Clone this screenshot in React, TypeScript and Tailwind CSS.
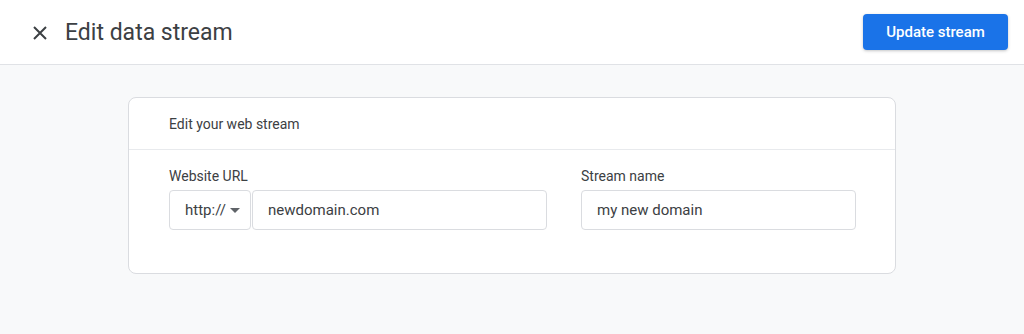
import { useState } from "react";

type FieldProps = {
  label: string;
  children: React.ReactNode;
  className?: string;
};

const Field = ({ label, children, className }: FieldProps) => (
  <div className={`flex flex-col gap-1 ${className ?? ""}`}>
    <label className="text-sm leading-5 text-[#3c4043]">{label}</label>
    {children}
  </div>
);

export default function App() {
  const [protocol] = useState("http://");
  const [url, setUrl] = useState("newdomain.com");
  const [name, setName] = useState("my new domain");

  return (
    <div
      className="min-h-[334px] bg-[#f8f9fa] text-[#202124]"
      style={{ fontFamily: "Roboto, 'Liberation Sans', sans-serif" }}
    >
      <header className="flex h-[65px] items-center justify-between border-b border-[#e0e2e6] bg-white pl-[29px] pr-4">
        <div className="flex items-center gap-[14px] pt-0.5">
          <button className="flex h-[22px] w-[22px] items-center justify-center text-[#3c4043]">
            <svg width="16" height="16" viewBox="0 0 16 16">
              <path
                d="M2 2 L14 14 M14 2 L2 14"
                stroke="currentColor"
                strokeWidth="2"
                fill="none"
              />
            </svg>
          </button>
          <h1 className="text-[23px] leading-7 text-[#3c4043]">
            Edit data stream
          </h1>
        </div>
        <button className="h-9 w-[145px] rounded bg-[#1a73e8] text-[15px] font-medium text-white shadow-[0_1px_3px_rgba(60,64,67,0.3)]">
          Update stream
        </button>
      </header>

      <main className="flex justify-center pt-8">
        <section className="w-[768px] rounded-lg border border-[#dadce0] bg-white">
          <div className="flex h-[52px] items-center border-b border-[#e8eaed] px-10">
            <p className="text-sm text-[#3c4043]">Edit your web stream</p>
          </div>
          <div className="flex gap-[34px] px-10 pb-[43px] pt-4">
            <Field label="Website URL">
              <div className="flex gap-px">
                <button className="flex h-10 w-[82px] items-center gap-1 rounded border border-[#dadce0] pl-[15px] text-[15px] text-[#3c4043]">
                  {protocol}
                  <svg width="10" height="5" viewBox="0 0 10 5">
                    <path d="M0 0 L10 0 L5 5 Z" fill="#5f6368" />
                  </svg>
                </button>
                <input
                  value={url}
                  onChange={(e) => setUrl(e.target.value)}
                  className="h-10 w-[295px] rounded border border-[#dadce0] px-[15px] text-[15px] text-[#3c4043] outline-none"
                />
              </div>
            </Field>
            <Field label="Stream name">
              <input
                value={name}
                onChange={(e) => setName(e.target.value)}
                className="h-10 w-[275px] rounded border border-[#dadce0] px-[15px] text-[15px] text-[#3c4043] outline-none"
              />
            </Field>
          </div>
        </section>
      </main>
    </div>
  );
}
